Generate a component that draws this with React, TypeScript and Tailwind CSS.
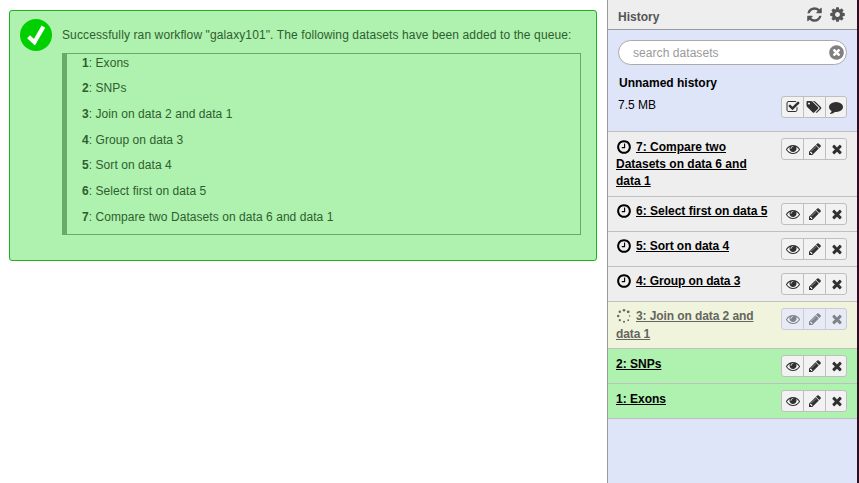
import React from "react";

const PATHS = {
  eye: "M1664 960q-152-236-381-353 61 104 61 225 0 185-131.5 316.5t-316.5 131.5-316.5-131.5-131.5-316.5q0-121 61-225-229 117-381 353 133 205 333.5 326.5t434.5 121.5 434.5-121.5 333.5-326.5zm-720-384q0-20-14-34t-34-14q-125 0-214.5 89.5t-89.5 214.5q0 20 14 34t34 14 34-14 14-34q0-86 61-147t147-61q20 0 34-14t14-34zm848 384q0 34-20 69-140 230-376.5 368.5t-499.5 138.5-499.5-139-376.5-368q-20-35-20-69t20-69q140-229 376.5-368t499.5-139 499.5 139 376.5 368q20 35 20 69z",
  pencil: "M491 1536l91-91-235-235-91 91v107h128v128h107zm523-928q0-22-22-22-10 0-17 7l-542 542q-7 7-7 17 0 22 22 22 10 0 17-7l542-542q7-7 7-17zm-54-192l416 416-832 832h-416v-416zm683 96q0 53-37 90l-166 166-416-416 166-165q36-38 90-38 53 0 91 38l235 234q37 39 37 91z",
  times: "M1490 1322q0 40-28 68l-136 136q-28 28-68 28t-68-28l-294-294-294 294q-28 28-68 28t-68-28l-136-136q-28-28-28-68t28-68l294-294-294-294q-28-28-28-68t28-68l136-136q28-28 68-28t68 28l294 294 294-294q28-28 68-28t68 28l136 136q28 28 28 68t-28 68l-294 294 294 294q28 28 28 68z",
  refresh: "M1639 1056q0 5-1 7-64 268-268 434.5t-478 166.5q-146 0-282.5-55t-243.5-157l-129 129q-19 19-45 19t-45-19-19-45v-448q0-26 19-45t45-19h448q26 0 45 19t19 45-19 45l-137 137q71 66 161 102t187 36q134 0 250-65t186-179q11-17 53-117 8-23 30-23h192q13 0 22.5 9.5t9.5 22.5zm25-800v448q0 26-19 45t-45 19h-448q-26 0-45-19t-19-45 19-45l138-138q-148-137-349-137-134 0-250 65t-186 179q-11 17-53 117-8 23-30 23h-199q-13 0-22.5-9.5t-9.5-22.5v-7q65-268 270-434.5t480-166.5q146 0 284 55.5t245 156.5l130-129q19-19 45-19t45 19 19 45z",
  cog: "M1152 896q0-106-75-181t-181-75-181 75-75 181 75 181 181 75 181-75 75-181zm512-109v222q0 12-8 23t-20 13l-185 28q-19 54-39 91 35 50 107 138 10 12 10 25t-9 23q-27 37-99 108t-94 71q-12 0-26-9l-138-108q-44 23-91 38-16 136-29 186-7 28-36 28h-222q-14 0-24.5-8.5t-11.5-21.5l-28-184q-49-16-90-37l-141 107q-10 9-25 9-14 0-25-11-126-114-165-168-7-10-7-23 0-12 8-23 15-21 51-66.5t54-70.5q-27-50-41-99l-183-27q-13-2-21-12.5t-8-23.5v-222q0-12 8-23t19-13l186-28q14-46 39-92-40-57-107-138-10-12-10-24 0-10 9-23 26-36 98.5-107.5t94.5-71.5q13 0 26 10l138 107q44-23 91-38 16-136 29-186 7-28 36-28h222q14 0 24.5 8.5t11.5 21.5l28 184q49 16 90 37l142-107q9-9 24-9 13 0 25 10 129 119 165 170 7 8 7 22 0 12-8 23-15 21-51 66.5t-54 70.5q26 50 41 98l183 28q13 2 21 12.5t8 23.5z",
  clear: "M1277 1122q0-26-19-45l-181-181 181-181q19-19 19-45 0-27-19-46l-90-90q-19-19-46-19-26 0-45 19l-181 181-181-181q-19-19-45-19-27 0-46 19l-90 90q-19 19-19 46 0 26 19 45l181 181-181 181q-19 19-19 45 0 27 19 46l90 90q19 19 46 19 26 0 45-19l181-181 181 181q19 19 45 19 27 0 46-19l90-90q19-19 19-46zm387-226q0 209-103 385.5t-279.5 279.5-385.5 103-385.5-103-279.5-279.5-103-385.5 103-385.5 279.5-279.5 385.5-103 385.5 103 279.5 279.5 103 385.5z",
  clock: "M1024 544v448q0 14-9 23t-23 9h-320q-14 0-23-9t-9-23v-64q0-14 9-23t23-9h224v-352q0-14 9-23t23-9h64q14 0 23 9t9 23zm416 352q0-148-73-273t-198-198-273-73-273 73-198 198-73 273 73 273 198 198 273 73 273-73 198-198 73-273zm224 0q0 209-103 385.5t-279.5 279.5-385.5 103-385.5-103-279.5-279.5-103-385.5 103-385.5 279.5-279.5 385.5-103 385.5 103 279.5 279.5 103 385.5z",
  check: "M1472 930v318q0 119-84.5 203.5t-203.5 84.5h-832q-119 0-203.5-84.5t-84.5-203.5v-832q0-119 84.5-203.5t203.5-84.5h832q63 0 117 25 15 7 18 23 3 17-9 29l-49 49q-10 10-23 10-3 0-9-2-23-6-45-6h-832q-66 0-113 47t-47 113v832q0 66 47 113t113 47h832q66 0 113-47t47-113v-254q0-13 9-22l64-64q10-10 23-10 6 0 12 3 20 8 20 29zm231-489l-814 814q-24 24-57 24t-57-24l-430-430q-24-24-24-57t24-57l110-110q24-24 57-24t57 24l263 263 647-647q24-24 57-24t57 24l110 110q24 24 24 57t-24 57z",
  tags: "M384 448q0-53-37.5-90.5t-90.5-37.5-90.5 37.5-37.5 90.5 37.5 90.5 90.5 37.5 90.5-37.5 37.5-90.5zm1067 576q0 53-37 90l-491 492q-39 37-91 37-53 0-90-37l-715-716q-38-37-64.5-101t-26.5-117v-416q0-52 38-90t90-38h416q53 0 117 26.5t102 64.5l715 714q37 39 37 91zm384 0q0 53-37 90l-491 492q-39 37-91 37-36 0-59-14t-53-45l470-470q37-37 37-90 0-52-37-91l-715-714q-38-38-102-64.5t-117-26.5h224q53 0 117 26.5t102 64.5l715 714q37 39 37 91z",
  comment: "M1792 896q0 174-120 321.5t-326 233-450 85.5q-70 0-145-8-198 175-460 242-49 14-114 22-17 2-30.5-9t-17.5-29v-1q-3-4-.5-12t2-10 4.5-9.5l6-9 7-8.5 8-9q7-8 31-34.5t34.5-38 31-39.5 32.5-51 27-59 26-76q-157-89-247.5-220t-90.5-281q0-130 71-248.5t191-204.5 286-136.5 348-50.5q244 0 450 85.5t326 233 120 321.5z",
};

type IconName = keyof typeof PATHS;

function Icon({ name, className }: { name: IconName; className: string }) {
  return (
    <svg viewBox="0 0 1792 1792" className={`shrink-0 overflow-visible fill-current ${className}`}>
      <path d={PATHS[name]} />
    </svg>
  );
}

function Spinner() {
  const dots = [
    [8, 2.2, 1.3], [12.2, 3.8, 1.4], [13.6, 8, 0.8], [12.2, 12.2, 0.9],
    [8, 13.8, 1], [3.8, 12.2, 1.1], [2.2, 8, 1.2], [3.8, 3.8, 1.2],
  ];
  return (
    <svg viewBox="0 0 16 16" className="mr-1 inline-block size-4 fill-current align-[-4px]">
      {dots.map(([x, y, r], i) => (
        <circle key={i} cx={x} cy={y} r={r} />
      ))}
    </svg>
  );
}

function Buttons({ icons, faded }: { icons: IconName[]; faded?: boolean }) {
  return (
    <div
      className={`grid h-[22px] w-[66px] shrink-0 grid-cols-[22px_22px_20px] divide-x rounded-[3px] border ${
        faded
          ? "divide-[#c9cdda] border-[#c9cdda] bg-[#e8ebf5] text-[#808289]"
          : "divide-[#bfbfbf] border-[#bfbfbf] bg-[#f2f2f2] text-[#303030]"
      }`}
    >
      {icons.map((name) => (
        <button
          key={name}
          className={`flex items-center ${name === "tags" || name === "comment" ? "pl-[3px]" : "pl-1"}`}
        >
          <Icon name={name} className="size-3.5" />
        </button>
      ))}
    </div>
  );
}

type Dataset = { title: string; state: "queued" | "running" | "ok"; row: string; text: string };

const DATASETS: Dataset[] = [
  { title: "7: Compare two Datasets on data 6 and data 1", state: "queued", row: "h-[65px] bg-[#eeeeee]", text: "pt-px leading-[17px]" },
  { title: "6: Select first on data 5", state: "queued", row: "h-[35px] bg-[#eeeeee]", text: "leading-[17px]" },
  { title: "5: Sort on data 4", state: "queued", row: "h-[35px] bg-[#eeeeee]", text: "leading-[17px] tracking-[-0.06px]" },
  { title: "4: Group on data 3", state: "queued", row: "h-[35px] bg-[#eeeeee]", text: "leading-[17px] tracking-[-0.1px]" },
  { title: "3: Join on data 2 and data 1", state: "running", row: "h-[47px] bg-[#f1f4dc] text-[#64665f]", text: "-mt-px leading-[18px] tracking-[-0.09px]" },
  { title: "2: SNPs", state: "ok", row: "h-[35px] bg-[#aff1af]", text: "pt-px leading-[17px]" },
  { title: "1: Exons", state: "ok", row: "h-[35px] bg-[#aff1af]", text: "pt-px leading-[17px]" },
];

const QUEUED = [
  "Exons",
  "SNPs",
  "Join on data 2 and data 1",
  "Group on data 3",
  "Sort on data 4",
  "Select first on data 5",
  "Compare two Datasets on data 6 and data 1",
];

function DatasetRow({ item }: { item: Dataset }) {
  return (
    <div className={`flex items-start justify-between border-b border-[#bfbfbf] pt-1.5 pr-2.5 pl-2 ${item.row}`}>
      <div className={`w-[157px] font-bold ${item.text}`}>
        {item.state === "queued" && <Icon name="clock" className="mr-1 inline-block size-4 align-[-4px]" />}
        {item.state === "running" && <Spinner />}
        <a className="underline">{item.title}</a>
      </div>
      <Buttons icons={["eye", "pencil", "times"]} faded={item.state === "running"} />
    </div>
  );
}

export default function App() {
  return (
    <div className="flex h-[483px] w-[859px] overflow-hidden bg-white font-['Liberation_Sans',Arial,sans-serif] text-[12px] text-black">
      <main className="flex-1 pt-2.5 pl-[9px]">
        <section className="flex h-[251px] w-[588px] rounded-[3px] border border-[#1fb01f] bg-[#aff1af] pt-2 pl-2.5 text-[#2d5f2d]">
          <svg viewBox="0 0 32 32" className="size-8 shrink-0">
            <circle cx="16" cy="16" r="16" fill="#00d000" />
            <path d="M8.6 17.8L14.4 23.2L23.4 7.6" fill="none" stroke="white" strokeWidth="4.2" />
          </svg>
          <div className="pl-2.5">
            <p className="h-[34px] pt-[7px] leading-[18px] tracking-[0.112px] whitespace-nowrap">
              Successfully ran workflow "galaxy101". The following datasets have been added to the queue:
            </p>
            <ul className="h-[182px] w-[519px] border border-l-[5px] border-[#67ab67] pl-[15px] tracking-[0.06px]">
              {QUEUED.map((name, i) => (
                <li key={name} className="relative -top-[0.4px] h-[25.7px] leading-[18px]">
                  <b>{i + 1}</b>: {name}
                </li>
              ))}
            </ul>
          </div>
        </section>
      </main>

      <aside className="w-[250px] border-l border-[#999999] bg-[#dfe5f9]">
        <header className="flex h-[30px] items-center border-b border-[#999999] bg-[#eeeeee] pl-2.5 text-[#555555]">
          <h1 className="flex-1 pt-[5px] font-bold">History</h1>
          <Icon name="refresh" className="size-[17px]" />
          <Icon name="cog" className="mr-[11px] ml-1.5 size-[17px]" />
        </header>
        <div className="h-[102px] border-b border-[#bfbfbf] pt-2.5 pr-2.5 pl-2.5">
          <div className="flex h-[25px] w-[229px] items-center rounded-full border border-[#aaaaaa] bg-white pr-px pl-3.5">
            <span className="flex-1 tracking-[0.06px] text-[#999999]">search datasets</span>
            <Icon name="clear" className="size-[17px] text-[#808080]" />
          </div>
          <h2 className="mt-[9px] pl-px leading-[18px] font-bold">Unnamed history</h2>
          <div className="mt-1 flex justify-between leading-[18px]">
            <span>7.5 MB</span>
            <Buttons icons={["check", "tags", "comment"]} />
          </div>
        </div>
        {DATASETS.map((item) => (
          <DatasetRow key={item.title} item={item} />
        ))}
      </aside>
      <div className="w-0.5 bg-[#310d22]" />
    </div>
  );
}
